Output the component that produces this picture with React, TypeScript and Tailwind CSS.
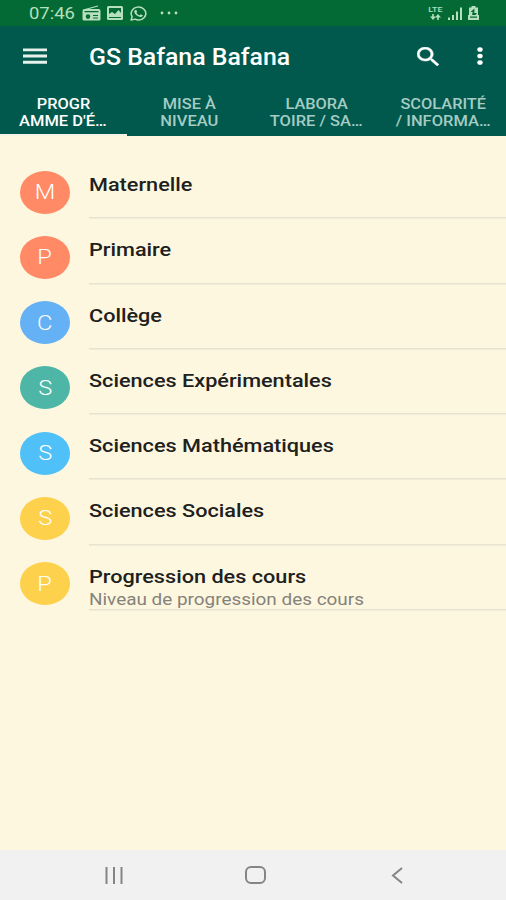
import React from 'react';

type Row = { letter: string; color: string; title: string; sub?: string };

const rows: Row[] = [
  { letter: 'M', color: 'bg-[#ff8a65]', title: 'Maternelle' },
  { letter: 'P', color: 'bg-[#ff8a65]', title: 'Primaire' },
  { letter: 'C', color: 'bg-[#64b1f6]', title: 'Collège' },
  { letter: 'S', color: 'bg-[#4db6a6]', title: 'Sciences Expérimentales' },
  { letter: 'S', color: 'bg-[#4fc0f8]', title: 'Sciences Mathématiques' },
  { letter: 'S', color: 'bg-[#fdd14b]', title: 'Sciences Sociales' },
  { letter: 'P', color: 'bg-[#fdd14b]', title: 'Progression des cours', sub: 'Niveau de progression des cours' },
];

const tabs: [string, string][] = [
  ['PROGR', "AMME D'É…"],
  ['MISE À', 'NIVEAU'],
  ['LABORA', 'TOIRE / SA…'],
  ['SCOLARITÉ', '/ INFORMA…'],
];

function StatusBar() {
  return (
    <div className="flex h-[26px] items-center bg-[#046a35] pl-[29px] pr-[27px] text-[#b5e0bb]">
      <span className="w-[53px] origin-left scale-x-[1.150] whitespace-nowrap pt-[2px] text-[16px] leading-[26px]">07:46</span>
      <svg className="h-[16px] w-[19px]" viewBox="0 0 19 16">
        <path d="M3 4.5 16 1" stroke="currentColor" strokeWidth="1.1" />
        <path fillRule="evenodd" fill="currentColor" d="M2 4h15a2 2 0 0 1 1.5 2v8a1.500 1.500 0 0 1-1.500 1.500H2A1.500 1.500 0 0 1 .5 14V6A2 2 0 0 1 2 4ZM2.500 6v1.300h14V6ZM6 9.300a2.300 2.300 0 1 0 0 4.600 2.300 2.300 0 0 0 0-4.600ZM11 10v1h5v-1ZM11 12.500v1h5v-1Z" />
      </svg>
      <svg className="ml-[6px] h-[14px] w-[16px]" viewBox="0 0 16 14">
        <path fillRule="evenodd" fill="currentColor" d="M1.500 0h13A1.500 1.500 0 0 1 16 1.500v11a1.500 1.500 0 0 1-1.500 1.500h-13A1.500 1.500 0 0 1 0 12.500v-11A1.500 1.500 0 0 1 1.500 0ZM2 2v6l3-2 3 2 3.500-4L14 7V2ZM2 11v1h12v-1Z" />
      </svg>
      <svg className="ml-[7px] h-[15px] w-[17px]" viewBox="0 0 24 24" preserveAspectRatio="none" fill="currentColor">
        <path d="M17.470 14.380c-.3-.15-1.760-.87-2.030-.97-.27-.1-.47-.15-.67.150-.2.300-.77.970-.94 1.160-.17.200-.35.220-.64.080-.3-.15-1.260-.46-2.390-1.470-.88-.79-1.480-1.760-1.650-2.060-.17-.3-.02-.46.130-.61.130-.13.300-.35.440-.52.150-.17.200-.3.300-.5.100-.2.050-.37-.02-.52-.08-.15-.67-1.610-.92-2.210-.24-.58-.49-.5-.67-.51h-.57c-.2 0-.52.070-.79.370-.27.300-1.040 1.020-1.040 2.480 0 1.460 1.070 2.880 1.210 3.070.15.200 2.100 3.200 5.080 4.490 2.500 1 3 .8 3.500.72.580-.09 1.760-.72 2-1.410.25-.69.250-1.290.18-1.410-.08-.12-.28-.2-.57-.35" />
        <path d="M1.500 22.500 3 17A10.300 10.300 0 1 1 7 21Z" fill="none" stroke="currentColor" strokeWidth="2.200" strokeLinejoin="round" />
      </svg>
      <svg className="ml-[13px] h-[4px] w-[18px]" viewBox="0 0 18 4" fill="currentColor">
        <circle cx="2" cy="2" r="1.400" />
        <circle cx="9" cy="2" r="1.400" />
        <circle cx="16" cy="2" r="1.400" />
      </svg>
      <div className="ml-auto flex items-center">
        <div className="flex w-[16px] flex-col items-center">
          <span className="h-[8px] scale-x-[1.1] text-[8px] font-medium leading-[8px]">LTE</span>
          <svg className="h-[6px] w-[11px]" viewBox="0 0 11 6" fill="currentColor">
            <path d="M2.200 0h1.600v2.500H6L3 6 0 2.500h2.200ZM7.200 6h1.600V3.500H11L8 0 5 3.500h2.200Z" />
          </svg>
        </div>
        <svg className="ml-[5px] h-[13px] w-[14px]" viewBox="0 0 14 13" fill="currentColor">
          <path d="M0 10.500h2V13H0ZM4 8h2v5H4ZM8 4.500h2V13H8ZM12 .500h2V13h-2Z" />
        </svg>
        <svg className="ml-[6px] h-[14px] w-[11px]" viewBox="0 0 11 14">
          <path fillRule="evenodd" fill="currentColor" d="M3.500 0h4v1.500H10V9h1v5H0V9h1V1.500h2.500ZM6.500 2.500 2.500 6h2.200L4 9h3.500l1.500-2H6.300ZM2 10.500v1.200h7v-1.200Z" />
        </svg>
      </div>
    </div>
  );
}

export default function App() {
  return (
    <div className="flex h-[900px] w-[506px] flex-col overflow-hidden bg-[#fdf7e0] font-['Roboto',sans-serif]">
      <StatusBar />
      <header className="flex h-[110px] flex-col bg-[#00594c] text-white">
        <div className="flex h-[60px] items-center pl-[23px] pr-[23px]">
          <svg className="h-[16px] w-[24px]" viewBox="0 0 24 16">
            <path d="M0 1.900h24M0 8h24M0 14.200h24" stroke="#e6f1ec" strokeWidth="2.900" />
          </svg>
          <h1 className="ml-[42px] origin-left scale-x-[1.080] whitespace-nowrap pt-[3px] text-[23px] font-medium leading-[57px]">GS Bafana Bafana</h1>
          <svg className="ml-auto h-[19px] w-[22px]" viewBox="3 3 17.490 17.490" preserveAspectRatio="none" fill="currentColor" stroke="currentColor" strokeWidth="0.400">
            <path d="M15.500 14h-.79l-.28-.27A6.470 6.470 0 0 0 16 9.500 6.500 6.500 0 1 0 9.500 16c1.610 0 3.090-.59 4.230-1.570l.27.280v.79l5 4.990L20.490 19l-4.990-5zm-6 0C7.010 14 5 11.990 5 9.500S7.010 5 9.500 5 14 7.010 14 9.500 11.990 14 9.500 14z" />
          </svg>
          <svg className="ml-[38px] h-[18px] w-[6px]" viewBox="0 0 6 18" fill="currentColor">
            <ellipse cx="3" cy="2.500" rx="2.700" ry="2.300" />
            <ellipse cx="3" cy="9" rx="2.700" ry="2.300" />
            <ellipse cx="3" cy="15.500" rx="2.700" ry="2.300" />
          </svg>
        </div>
        <nav className="grid h-[50px] grid-cols-4">
          {tabs.map(([a, b], i) => (
            <div
              key={a}
              className={`flex flex-col items-center whitespace-nowrap pt-[10px] text-[15px] font-medium leading-[16.500px] ${i === 0 ? 'border-b-2 border-[#f3f3e6] text-white' : 'text-[#a5ccc4]'}`}
            >
              <span className="scale-x-[1.090]">{a}</span>
              <span className="scale-x-[1.100]">{b}</span>
            </div>
          ))}
        </nav>
      </header>
      <main className="flex-1 pt-[17px]">
        {rows.map((r) => (
          <div key={r.title} className="flex h-[65.300px] pl-[20px]">
            <div className={`mt-[17.500px] flex h-[43px] w-[49.500px] shrink-0 items-center justify-center rounded-[50%] ${r.color}`}>
              <span className="scale-x-[1.130] pt-px text-[21px] font-light leading-none text-white">{r.letter}</span>
            </div>
            <div className="ml-[19.500px] mt-[0.500px] flex-1 border-b-[1.500px] border-[#e8e3cf] pt-[19.500px] shadow-[0_1px_0_#f1ecd7]">
              <div className="w-max origin-left scale-x-[1.171] text-[18.500px] font-medium leading-[24px] text-[#20201c]">{r.title}</div>
              {r.sub && <div className="w-max origin-left scale-x-[1.182] pt-px text-[16px] leading-[20px] text-[#85827a]">{r.sub}</div>}
            </div>
          </div>
        ))}
      </main>
      <footer className="flex h-[50px] items-center bg-[#f1f1f1] pl-[104px] text-[#858585]">
        <svg className="h-[17px] w-[20px]" viewBox="0 0 20 17">
          <path d="M2.500 0v17M10 0v17M17.500 0v17" stroke="currentColor" strokeWidth="2" />
        </svg>
        <svg className="ml-[121px] h-[18px] w-[21px]" viewBox="0 0 21 18">
          <rect x="1" y="1" width="19" height="16" rx="5" fill="none" stroke="currentColor" strokeWidth="2" />
        </svg>
        <svg className="ml-[125px] h-[17px] w-[12px]" viewBox="0 0 12 17">
          <path d="M11 1 2 8.500l9 7.500" fill="none" stroke="currentColor" strokeWidth="2" />
        </svg>
      </footer>
    </div>
  );
}
